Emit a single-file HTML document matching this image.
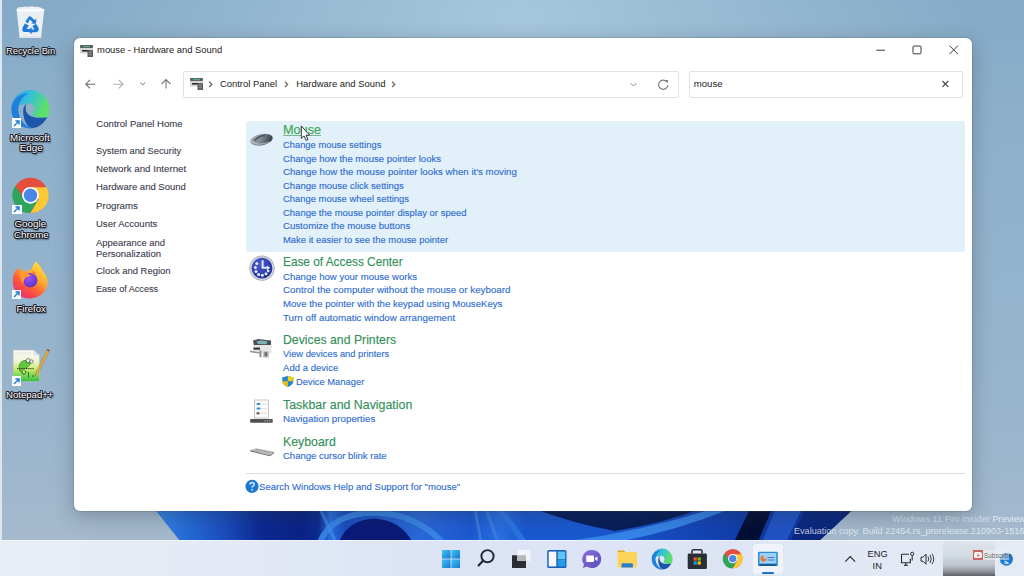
<!DOCTYPE html>
<html><head><meta charset="utf-8">
<style>
*{margin:0;padding:0;box-sizing:border-box}
html,body{width:1024px;height:576px;overflow:hidden}
body{position:relative;font-family:"Liberation Sans",sans-serif;background:#8fb0ca}
.a{position:absolute;white-space:nowrap;line-height:1;transform-origin:0 0}
svg{position:absolute;overflow:visible}
#wall{position:absolute;left:0;top:0;width:1024px;height:576px;
 background:radial-gradient(ellipse 460px 260px at 520px 20px,rgba(170,202,222,.9) 0%,rgba(170,202,222,0) 100%),linear-gradient(180deg,#85aac6 0%,#8fb0cb 25%,#94b3cc 50%,#9bb6cd 78%,#a5b9cd 94%,#a8bacd 100%)}
#edge{position:absolute;left:0;top:0;width:1.5px;height:540px;background:#dfe5ec}
.dl{position:absolute;color:#fafafa;font-size:9.6px;line-height:1;white-space:nowrap;text-shadow:1px 0 0 #1c1c28,-1px 0 0 #1c1c28,0 1px 0 #1c1c28,0 -1px 0 #1c1c28,.7px .7px 0 #1c1c28,-.7px -.7px 0 #1c1c28,.7px -.7px 0 #1c1c28,-.7px .7px 0 #1c1c28,1px 1.5px 1.5px rgba(0,0,0,.7)}
#win{position:absolute;left:74px;top:38px;width:898px;height:473px;background:#fff;border-radius:6px;
 box-shadow:0 5px 20px rgba(40,50,60,.32),0 0 0 1px rgba(70,80,90,.18)}
.nav{color:#3a3a4c;font-size:9.6px;-webkit-text-stroke:0.2px rgba(58,58,76,.5)}
.lk{color:#2a6ad0;font-size:9.7px;-webkit-text-stroke:0.2px rgba(42,106,208,.6)}
.hd{color:#34905a;font-size:12.2px;-webkit-text-stroke:0.25px rgba(52,144,90,.6)}
#tb{position:absolute;left:0;top:540px;width:1024px;height:36px;background:linear-gradient(90deg,#e8edf5 0%,#e4eaf5 20%,#dbe3f5 45%,#dde5f5 70%,#e2e9f4 85%,#e4ebf5 100%);box-shadow:inset 0 1px 0 rgba(255,255,255,.5)}
.box{position:absolute;background:#fff;border:1px solid #e1e1e1;border-radius:2px}

</style></head><body>
<div id="wall"></div>
<svg style="left:0;top:500px" width="1024" height="42" viewBox="0 500 1024 42">
 <defs>
  <linearGradient id="bl" x1="150" y1="0" x2="860" y2="0" gradientUnits="userSpaceOnUse"><stop offset="0.007" stop-color="#3584e4"/><stop offset="0.056" stop-color="#2468d4"/><stop offset="0.106" stop-color="#1a4cbc"/><stop offset="0.155" stop-color="#0c2a92"/><stop offset="0.211" stop-color="#0a2286"/><stop offset="0.237" stop-color="#0c2a90"/><stop offset="0.254" stop-color="#2a70dc"/><stop offset="0.275" stop-color="#1a4cc0"/><stop offset="0.380" stop-color="#2a68d8"/><stop offset="0.451" stop-color="#1c58d0"/><stop offset="0.493" stop-color="#2a70e0"/><stop offset="0.528" stop-color="#1a58d0"/><stop offset="0.634" stop-color="#1a58d0"/><stop offset="0.775" stop-color="#1444b4"/><stop offset="0.838" stop-color="#103ca8"/><stop offset="0.915" stop-color="#0e36a0"/><stop offset="0.990" stop-color="#0a2a8a"/></linearGradient>
  <clipPath id="bc"><path d="M154.5 509L180 541H819L853.5 509Z"/></clipPath>
 </defs>
 <g clip-path="url(#bc)">
  <rect x="150" y="505" width="710" height="40" fill="url(#bl)"/>
  <path d="M318 548Q328 513 375 512.5Q420 514 447 548" fill="none" stroke="#3a86e6" stroke-width="6" opacity="0.9"/>
  <path d="M338 545Q346 520 374 518.5Q402 520 414 545Z" fill="#0a1a78"/>
  <path d="M475 509L481 542M486 509L498 542" stroke="#3a80e0" stroke-width="3" opacity="0.8"/>
  <path d="M500 509L524 542" stroke="#2f78e6" stroke-width="6" opacity="0.8"/>
  <path d="M535 509Q575 524 615 531Q660 524 700 509Z" fill="#03103e" opacity="0.8"/>
  <path d="M530 545Q620 538 712 509L730 509Q640 545 560 548Z" fill="#3a88ea" opacity="0.9"/>
  <path d="M320 509L336 542" stroke="#3f8de8" stroke-width="3" opacity="0.7"/>
  <path d="M750 509L772 509L758 542L734 542Z" fill="#030a2a" opacity="0.9"/>
  <path d="M776 509L802 509L786 542L762 542Z" fill="#2456c8" opacity="0.9"/>
  <path d="M805 509L853 509L820 542L790 542Z" fill="#0a2478" opacity="0.8"/>
 </g>
</svg>
<div id="edge"></div>
<div class="a" style="left:891.6px;top:513.9px;font-size:9.8px;transform:scaleX(0.952);color:rgba(228,237,246,.74)">Windows 11 Pro Insider <span style="color:rgba(235,243,250,.9)">Preview</span></div>
<div class="a" style="left:794px;top:526.1px;font-size:9.8px;transform:scaleX(0.926);color:rgba(235,242,250,.82)">Evaluation copy. Build 22454.rs_prerelease.210903-1516</div>
<!-- recycle bin -->
<svg style="left:14px;top:4px" width="34" height="36" viewBox="14 4 34 36">
 <path d="M16.6 9.3Q18 6.5 22 7.2Q25 5.8 28 7Q32 5.6 35 7Q39 6 44.3 9.3L41 37.8H19.6Z" fill="#eef2f6" opacity="0.95"/>
 <path d="M16.6 9.3H44.3L44 11.5H16.9Z" fill="#fbfcfd"/>
 <path d="M19.6 37.8H41L41.2 36H19.4Z" fill="#dfe6ee"/>
 <g fill="#1f7ad8">
  <path d="M25.4 21.8L28.4 17.2Q29.6 15.6 31.2 16.9L34.4 20L36.4 18.8L35.8 23.8L31 23.4L32.8 22.2L29.8 19.6L27.8 23.4Z"/>
  <path d="M22.6 27.4L25 23.4L28.8 25.4L26.6 29L30.4 29L28.6 32L24.2 32Q21.6 31.4 22.6 27.4Z"/>
  <path d="M38.4 27.6L36 23.8L32.4 26L34.4 29.4L31.6 29.4L31.6 27.2L27.8 30.8L31.6 34.2L31.6 32.2L36.6 32.2Q39.6 31.4 38.4 27.6Z"/>
 </g>
</svg>
<div class="dl" style="left:6px;top:47px;font-size:9.3px">Recycle Bin</div>
<!-- edge -->
<svg style="left:10px;top:89px" width="42" height="42" viewBox="10 89 42 42">
 <defs>
  <linearGradient id="eg1" x1="0" y1="0" x2="1" y2="0.35"><stop offset="0" stop-color="#2c9ee6"/><stop offset="0.5" stop-color="#35c0d8"/><stop offset="1" stop-color="#5ee06a"/></linearGradient>
 </defs>
 <path d="M11.3 109A19.1 19.1 0 0 1 49.5 109.3Q49.5 115 47.2 117.2Q37 119 32 114.5Q34.6 112 34.6 108.5Q34 104 29 103.5Q20 103.5 11.3 109Z" fill="url(#eg1)"/>
 <path d="M11.3 109C11.8 99 20 93.5 28.5 93.2C21 96.5 17.5 104 18.5 112C19.8 121 26 127 33.5 128.3C32.5 128.4 31.5 128.4 30.5 128.4C19.5 128.4 11.3 120 11.3 109Z" fill="#1f80dc"/>
 <path d="M23.2 111C23.2 107 24.8 104.5 27.5 103.5C25.5 106.5 25.3 110 27 113C30 117.2 36 118.6 47.2 117.2C44 123.5 38 127.8 32.5 128C26.5 127.5 23.2 119 23.2 111Z" fill="#1b56aa"/>
 <path d="M26.5 103.6Q30.5 102.8 33 105.5Q35 108.5 34 111.5Q33 114 30.5 114.3Q27 114.2 26 110.5Q25.3 106.5 26.5 103.6Z" fill="#8fb0c9"/>
</svg>
<div class="a" style="left:11.6px;top:118.3px;width:9.6px;height:9.8px;background:#fbfdff"></div>
<svg style="left:12px;top:119px" width="9" height="9" viewBox="0 0 9 9"><path d="M2 7L7 2M3.5 2H7V5.5" stroke="#1f78d0" stroke-width="1.4" fill="none"/></svg>
<div class="dl" style="left:10px;top:133px;font-size:9.8px">Microsoft</div>
<div class="dl" style="left:19.8px;top:143.3px;font-size:9.8px">Edge</div>
<!-- chrome -->
<svg style="left:11px;top:176px" width="40" height="40" viewBox="11 176 40 40">
 <circle cx="30.5" cy="195.3" r="17.6" fill="#e54d3c"/>
 <path d="M15.2 185.8L26.5 202L38.6 199.3L30.5 212.9A17.6 17.6 0 0 1 15.2 185.8Z" fill="#2ea55a"/>
 <path d="M46.7 187.3A17.6 17.6 0 0 1 30.5 212.9L38.6 199.3L30.5 187.3Z" fill="#fcc934"/>
 <circle cx="30.5" cy="195.3" r="8.4" fill="#fff"/>
 <circle cx="30.5" cy="195.3" r="6.7" fill="#4a86e8"/>
</svg>
<div class="a" style="left:12px;top:204.5px;width:9.6px;height:9.8px;background:#fbfdff"></div>
<svg style="left:12.4px;top:205px" width="9" height="9" viewBox="0 0 9 9"><path d="M2 7L7 2M3.5 2H7V5.5" stroke="#1f78d0" stroke-width="1.4" fill="none"/></svg>
<div class="dl" style="left:14.5px;top:218.7px;font-size:9.8px">Google</div>
<div class="dl" style="left:13.9px;top:230px;font-size:9.8px">Chrome</div>
<!-- firefox -->
<svg style="left:11px;top:259px" width="40" height="42" viewBox="11 259 40 42">
 <defs>
  <linearGradient id="ff1" x1="0.85" y1="0" x2="0.15" y2="1"><stop offset="0" stop-color="#ffe64a"/><stop offset="0.35" stop-color="#ffb02e"/><stop offset="0.65" stop-color="#ff5a36"/><stop offset="1" stop-color="#e8247e"/></linearGradient>
  <radialGradient id="ff2" cx="0.4" cy="0.35" r="0.7"><stop offset="0" stop-color="#a050f8"/><stop offset="1" stop-color="#5a34c8"/></radialGradient>
 </defs>
 <path d="M35.6 261.6Q41 266 43 271.5Q47.5 276 47.5 282Q47.5 293 36 297.5Q28 299.8 21 296.5Q12.8 291.5 12.8 281.5Q12.8 275 15.5 270.5L18.2 267.6L19.6 271.6L22.4 268.4L24.6 272.2Q28 269.5 31 270Q32.5 266 35.6 261.6Z" fill="url(#ff1)"/>
 <circle cx="30.2" cy="280.2" r="7.2" fill="url(#ff2)"/>
 <path d="M19.5 272.5Q24 271 27.5 273.5Q29.5 275 31.5 275Q29 277 25.5 277.3Q23.5 280 23.2 284Q20 280 19.5 272.5Z" fill="#ff9a2a"/>
 <path d="M31.5 270.8Q35.5 271.5 36.2 274Q34 273.6 32.5 274.2Z" fill="#ff7a3a"/>
</svg>
<div class="a" style="left:12px;top:289.5px;width:9.4px;height:9.4px;background:#fbfdff"></div>
<svg style="left:12.2px;top:289.8px" width="9" height="9" viewBox="0 0 9 9"><path d="M2 7L7 2M3.5 2H7V5.5" stroke="#1f78d0" stroke-width="1.4" fill="none"/></svg>
<div class="dl" style="left:16.5px;top:304.3px;font-size:9.6px">Firefox</div>
<!-- notepad++ -->
<svg style="left:11px;top:347px" width="42" height="40" viewBox="11 347 42 40">
 <defs><linearGradient id="np1" x1="0" y1="0" x2="0" y2="1"><stop offset="0" stop-color="#fbfbf8"/><stop offset="0.35" stop-color="#f0f4d8"/><stop offset="0.6" stop-color="#c8ec70"/><stop offset="1" stop-color="#30c040"/></linearGradient></defs>
 <path d="M13.2 350H33.5L39.5 355.5V381.5H13.2Z" fill="url(#np1)" stroke="#b8bcc0" stroke-width="0.6"/>
 <path d="M33.5 350V355.5H39.5Z" fill="#dde0e4"/>
 <path d="M15.5 352.5h16M15.5 354.2h16" stroke="#c8ccd0" stroke-width="0.5" stroke-dasharray="1 0.6"/>
 <path d="M19 369Q18.5 362 24 360.5Q28 359.5 31 362Q30 366 27 367.5Q23 368.5 21.5 372Q19.5 371.5 19 369Z" fill="#5cc83a" stroke="#2a5a20" stroke-width="0.5"/>
 <circle cx="28.2" cy="360.6" r="2" fill="#f4f4f4" stroke="#333" stroke-width="0.6"/>
 <circle cx="31.5" cy="361.6" r="1.7" fill="#f4f4f4" stroke="#333" stroke-width="0.6"/>
 <path d="M17 368.6H34" stroke="#2a2a2a" stroke-width="0.9" stroke-dasharray="1.2 0.6"/>
 <path d="M22 371.5a2 2 0 1 0 2.5 -1.2M28.5 372v5.5M32 376h2" fill="none" stroke="#2a4a20" stroke-width="0.8"/>
 <path d="M47.6 349.2L35.6 373.2L35.4 375.8L37.4 374.2L49.6 350.2Z" fill="#f2b430" stroke="#8a6020" stroke-width="0.4"/>
 <path d="M47.6 349.2L49.6 350.2L48.8 351.6L46.9 350.6Z" fill="#7a4a6a"/>
</svg>
<div class="a" style="left:11.6px;top:376px;width:9.6px;height:9.8px;background:#fbfdff"></div>
<svg style="left:12px;top:376.5px" width="9" height="9" viewBox="0 0 9 9"><path d="M2 7L7 2M3.5 2H7V5.5" stroke="#1f78d0" stroke-width="1.4" fill="none"/></svg>
<div class="dl" style="left:6px;top:390px;font-size:9.6px">Notepad++</div>
<div id="win"></div>
<!-- title icon -->
<svg style="left:80px;top:45px" width="13" height="12" viewBox="0 0 13 12">
 <rect x="0" y="0" width="13" height="3" rx="1" fill="#5a5a5a"/>
 <rect x="3" y="0.8" width="7" height="1.4" fill="#48b07a"/>
 <rect x="0" y="3" width="13" height="5.5" fill="#d4d4d4"/>
 <rect x="2" y="5" width="7" height="1.6" fill="#2e2e2e"/>
 <rect x="7.5" y="5.2" width="5.5" height="6.8" fill="#5c5c5c"/>
 <path d="M8.5 7.5h3.5M8.5 9.5h3.5M10.2 6.2v5" stroke="#9a9a9a" stroke-width="0.6"/>
</svg>
<div class="a" style="left:97.1px;top:45.3px;font-size:9.4px;color:#1a1a1a">mouse - Hardware and Sound</div>
<!-- title buttons -->
<svg style="left:870px;top:40px" width="100" height="20" viewBox="870 40 100 20">
 <path d="M876.3 50.2h8.7" stroke="#3a3a3a" stroke-width="1"/>
 <rect x="913" y="46" width="8" height="7.8" rx="1" fill="none" stroke="#3a3a3a" stroke-width="1"/>
 <path d="M949.5 45.7l8.4 8.4M957.9 45.7l-8.4 8.4" stroke="#3a3a3a" stroke-width="1"/>
</svg>
<!-- nav arrows -->
<svg style="left:80px;top:74px" width="100" height="20" viewBox="80 74 100 20">
 <path d="M95.2 84.2H85.8M90 79.9l-4.2 4.3 4.2 4.2" stroke="#6e6e6e" stroke-width="1.1" fill="none"/>
 <path d="M113.6 84.2h9.4M118.8 79.9l4.2 4.3-4.2 4.2" stroke="#adadad" stroke-width="1.1" fill="none"/>
 <path d="M140.3 82.6l2.4 2.2 2.4-2.2" stroke="#6a6a6a" stroke-width="1" fill="none"/>
 <path d="M166 88.6V79.6M161.6 84l4.4-4.4 4.4 4.4" stroke="#7a7a7a" stroke-width="1.1" fill="none"/>
</svg>
<div class="box" style="left:183px;top:71px;width:496px;height:27px"></div>
<div class="box" style="left:689px;top:71px;width:274px;height:26.5px"></div>
<!-- address icon -->
<svg style="left:190px;top:78px" width="13" height="12" viewBox="0 0 13 12">
 <rect x="0" y="0" width="13" height="3" rx="1" fill="#5a5a5a"/>
 <rect x="3" y="0.8" width="7" height="1.4" fill="#48b07a"/>
 <rect x="0" y="3" width="13" height="5.5" fill="#d4d4d4"/>
 <rect x="2" y="5" width="7" height="1.6" fill="#2e2e2e"/>
 <rect x="7.5" y="5.2" width="5.5" height="6.8" fill="#5c5c5c"/>
 <path d="M8.5 7.5h3.5M8.5 9.5h3.5M10.2 6.2v5" stroke="#9a9a9a" stroke-width="0.6"/>
</svg>
<svg style="left:200px;top:74px" width="480" height="20" viewBox="200 74 480 20">
 <path d="M209.2 81.8l2.6 2.6-2.6 2.6M285 81.8l2.6 2.6-2.6 2.6M392.2 81.8l2.6 2.6-2.6 2.6" stroke="#6a6a6a" stroke-width="1.3" fill="none"/>
 <path d="M630.5 83l3 3 3-3" stroke="#8a8a8a" stroke-width="1" fill="none"/>
 <path d="M666.6 81.6A4.6 4.6 0 1 0 667.8 84.9" stroke="#787878" stroke-width="1.1" fill="none"/>
 <path d="M664.6 80h3.2v3.2z" fill="#787878"/>
</svg>
<div class="a" style="left:219.9px;top:79px;font-size:9.45px;color:#1a1a1a">Control Panel</div>
<div class="a" style="left:296.25px;top:79px;font-size:9.45px;color:#1a1a1a">Hardware and Sound</div>
<div class="a" style="left:693.75px;top:78.8px;font-size:9.6px;color:#1a1a1a">mouse</div>
<svg style="left:940px;top:78px" width="12" height="12" viewBox="940 78 12 12">
 <path d="M942.5 81l5.8 5.8M948.3 81l-5.8 5.8" stroke="#444" stroke-width="1.1"/>
</svg>
<!-- highlight -->
<div style="position:absolute;left:245.5px;top:121px;width:719px;height:130.5px;background:#e2f0fa;border-radius:2px"></div>
<div style="position:absolute;left:245.5px;top:472.5px;width:719px;height:1px;background:#dcdcdc"></div>
<!-- mouse icon -->
<svg style="left:248px;top:130px" width="28" height="18" viewBox="248 130 28 18">
 <defs><linearGradient id="mg" x1="0" y1="0" x2="1" y2="0.3"><stop offset="0" stop-color="#a8b0b6"/><stop offset="0.55" stop-color="#858e95"/><stop offset="1" stop-color="#3a4650"/></linearGradient></defs>
 <ellipse cx="261.5" cy="139.7" rx="11.4" ry="5.6" transform="rotate(-12 261.5 139.7)" fill="url(#mg)"/>
 <path d="M254.5 140.5Q260 135.5 265 135.6" stroke="#4a535a" stroke-width="1.5" fill="none"/>
 <path d="M251 141.5Q258 146.5 270 142" stroke="#c8ccd0" stroke-width="0.8" fill="none"/>
</svg>
<!-- ease of access icon -->
<svg style="left:248px;top:254px" width="28" height="28" viewBox="248 254 28 28">
 <defs><radialGradient id="ea" cx="0.4" cy="0.3" r="0.75"><stop offset="0" stop-color="#4a5cd0"/><stop offset="1" stop-color="#1e2c98"/></radialGradient></defs>
 <circle cx="262" cy="268.2" r="12.6" fill="#9aa0ac"/>
 <circle cx="262" cy="268.2" r="11.9" fill="#d4d8e0"/>
 <circle cx="262" cy="268.2" r="10.4" fill="url(#ea)"/>
 <g fill="#e4e9f6">
  <circle cx="256.8" cy="263.6" r="1.5"/><circle cx="255.4" cy="267.6" r="1.5"/><circle cx="256" cy="271.6" r="1.5"/><circle cx="258.6" cy="274.4" r="1.5"/><circle cx="262.4" cy="275.2" r="1.5"/><circle cx="266" cy="273.8" r="1.5"/><circle cx="268.2" cy="271" r="1.3"/>
 </g>
 <path d="M262.6 260.2v7.6h5.2" stroke="#e4e9f6" stroke-width="2" fill="none"/>
 <path d="M267 265.4l3.2 2.4-3.2 2.4z" fill="#e4e9f6"/>
</svg>
<!-- printer icon -->
<svg style="left:248px;top:337px" width="26" height="22" viewBox="248 337 26 22">
 <path d="M253 340.6l5-1.6 13 1.4v5l-2 1H254z" fill="#4a4e52"/>
 <path d="M256.5 341.3l4.5-.9 6.5.8-1 3-8.5-.3z" fill="#7fb0b8"/>
 <rect x="253" y="345" width="18.6" height="8.2" fill="#e6e6e6"/>
 <path d="M253.5 347.5h6.5v2.2h-6.5z" fill="#3a3a3a"/>
 <path d="M250 350.5l9.5 1.7v1.5l-9.5-1.5z" fill="#9a9a9a"/>
 <rect x="259.5" y="350.4" width="2" height="6.8" fill="#8c8c8c"/>
 <rect x="263" y="351" width="6" height="6.8" rx="1" fill="#c4c4c4"/>
 <rect x="264.5" y="352.2" width="2.8" height="4" fill="#6a6a6a"/>
</svg>
<!-- shield -->
<svg style="left:281px;top:375px" width="14" height="13" viewBox="281 375 14 13">
 <path d="M287.8 375.8Q285 377 282.3 377.2V381Q282.6 385 287.8 387Q293 385 293.4 381V377.2Q290.6 377 287.8 375.8z" fill="#1c86d8"/>
 <path d="M287.8 375.8Q290.6 377 293.4 377.2V381.3H287.8z" fill="#f2d300"/>
 <path d="M282.3 381.3H287.8V387Q282.6 385 282.3 381.3z" fill="#f4c000"/>
</svg>
<!-- taskbar icon -->
<svg style="left:249px;top:398px" width="26" height="26" viewBox="249 398 26 26">
 <rect x="254.5" y="400" width="14" height="18" fill="#fafafa" stroke="#b8b8b8" stroke-width="0.8"/>
 <rect x="256.5" y="403" width="4" height="2" rx="1" fill="#2f8fe0"/>
 <rect x="256.5" y="407.6" width="4" height="2" rx="1" fill="#2f8fe0"/>
 <rect x="256.5" y="412.3" width="3" height="2" fill="#555"/>
 <path d="M261 404h6M261 408.6h6M261 413.3h6" stroke="#d0d0d0" stroke-width="0.6"/>
 <rect x="250.2" y="419" width="22.5" height="3.8" rx="0.6" fill="#505050"/>
 <path d="M264.5 420.9h1.2M267 420.9h1.2M269.5 420.9h1.2" stroke="#c8c8c8" stroke-width="1"/>
</svg>
<!-- keyboard icon -->
<svg style="left:248px;top:446px" width="28" height="12" viewBox="248 446 28 12">
 <path d="M250 450.2l6-2 18 3.5-4 3.8z" fill="#b9b9b9"/>
 <path d="M250 450.2l20 5.3 4-3.8v1.2l-4 3.4-20-5.1z" fill="#5a5a5a"/>
 <path d="M256 449.5l14 2.8" stroke="#8a8a8a" stroke-width="0.5"/>
</svg>
<!-- help icon -->
<svg style="left:244px;top:479px" width="16" height="16" viewBox="244 479 16 16">
 <circle cx="252" cy="486.3" r="6.6" fill="#1a78d0"/>
 <path d="M249.9 484.6Q250 482.5 252.1 482.5Q254.2 482.6 254.2 484.4Q254.1 485.6 252.6 486.3Q252.1 486.7 252.1 487.6" stroke="#cfe4f8" stroke-width="1.5" fill="none"/>
 <circle cx="252.1" cy="489.8" r="0.95" fill="#cfe4f8"/>
</svg>
<div class="a nav" style="left:96.30px;top:119.14px;transform:scaleX(1.000);">Control Panel Home</div>
<div class="a nav" style="left:96.30px;top:145.54px;transform:scaleX(0.968);">System and Security</div>
<div class="a nav" style="left:96.30px;top:163.74px;transform:scaleX(1.012);">Network and Internet</div>
<div class="a nav" style="left:96.30px;top:182.34px;transform:scaleX(0.991);">Hardware and Sound</div>
<div class="a nav" style="left:96.30px;top:200.84px;transform:scaleX(1.007);">Programs</div>
<div class="a nav" style="left:96.30px;top:219.14px;transform:scaleX(0.992);">User Accounts</div>
<div class="a nav" style="left:96.30px;top:237.54px;transform:scaleX(0.980);">Appearance and</div>
<div class="a nav" style="left:96.30px;top:249.44px;transform:scaleX(0.991);">Personalization</div>
<div class="a nav" style="left:96.30px;top:265.64px;transform:scaleX(0.984);">Clock and Region</div>
<div class="a nav" style="left:96.30px;top:283.84px;transform:scaleX(0.945);">Ease of Access</div>
<div class="a hd" style="left:283.20px;top:124.03px;transform:scaleX(1.040);text-decoration:underline;color:#3cae50">Mouse</div>
<div class="a hd" style="left:283.20px;top:256.23px;transform:scaleX(0.970);">Ease of Access Center</div>
<div class="a hd" style="left:283.20px;top:333.63px;transform:scaleX(1.006);">Devices and Printers</div>
<div class="a hd" style="left:283.20px;top:399.23px;transform:scaleX(1.015);">Taskbar and Navigation</div>
<div class="a hd" style="left:283.20px;top:435.83px;transform:scaleX(1.012);">Keyboard</div>
<div class="a lk" style="left:282.90px;top:140.06px;transform:scaleX(0.966);">Change mouse settings</div>
<div class="a lk" style="left:282.90px;top:153.56px;transform:scaleX(0.988);">Change how the mouse pointer looks</div>
<div class="a lk" style="left:282.90px;top:167.16px;transform:scaleX(1.000);">Change how the mouse pointer looks when it&#39;s moving</div>
<div class="a lk" style="left:282.90px;top:180.75px;transform:scaleX(0.980);">Change mouse click settings</div>
<div class="a lk" style="left:282.90px;top:194.25px;transform:scaleX(0.971);">Change mouse wheel settings</div>
<div class="a lk" style="left:282.90px;top:207.85px;transform:scaleX(0.979);">Change the mouse pointer display or speed</div>
<div class="a lk" style="left:282.90px;top:221.45px;transform:scaleX(0.993);">Customize the mouse buttons</div>
<div class="a lk" style="left:282.90px;top:234.95px;transform:scaleX(0.973);">Make it easier to see the mouse pointer</div>
<div class="a lk" style="left:282.90px;top:271.86px;transform:scaleX(0.988);">Change how your mouse works</div>
<div class="a lk" style="left:282.90px;top:285.36px;transform:scaleX(1.008);">Control the computer without the mouse or keyboard</div>
<div class="a lk" style="left:282.90px;top:298.95px;transform:scaleX(0.991);">Move the pointer with the keypad using MouseKeys</div>
<div class="a lk" style="left:282.90px;top:312.56px;transform:scaleX(1.012);">Turn off automatic window arrangement</div>
<div class="a lk" style="left:282.90px;top:349.25px;transform:scaleX(0.964);">View devices and printers</div>
<div class="a lk" style="left:282.90px;top:362.75px;transform:scaleX(0.987);">Add a device</div>
<div class="a lk" style="left:282.90px;top:414.15px;transform:scaleX(1.008);">Navigation properties</div>
<div class="a lk" style="left:282.90px;top:450.75px;transform:scaleX(0.982);">Change cursor blink rate</div>
<div class="a lk" style="left:296.10px;top:376.56px;transform:scaleX(0.968);">Device Manager</div>
<div class="a lk" style="left:259.40px;top:481.95px;transform:scaleX(0.989);">Search Windows Help and Support for &quot;mouse&quot;</div>
<!-- cursor -->
<svg style="left:300px;top:125px" width="12" height="17" viewBox="300 125 12 17">
 <path d="M301.3 125.9V138.4L304.1 135.9L306.1 140.3L308 139.5L306 135.2H309.6Z" fill="#fff" stroke="#222" stroke-width="0.9" stroke-linejoin="round"/>
</svg>
<div id="tb"></div>
<!-- start -->
<svg style="left:441px;top:549px" width="20" height="20" viewBox="441 549 20 20">
 <defs><linearGradient id="wl" x1="0" y1="0" x2="1" y2="1"><stop offset="0" stop-color="#3cc4f4"/><stop offset="1" stop-color="#1a78d0"/></linearGradient></defs>
 <rect x="442" y="550" width="8.6" height="8.6" fill="url(#wl)"/>
 <rect x="451.4" y="550" width="8.6" height="8.6" fill="url(#wl)"/>
 <rect x="442" y="559.4" width="8.6" height="8.6" fill="url(#wl)"/>
 <rect x="451.4" y="559.4" width="8.6" height="8.6" fill="url(#wl)"/>
</svg>
<!-- search -->
<svg style="left:476px;top:548px" width="22" height="22" viewBox="476 548 22 22">
 <circle cx="487.5" cy="556.2" r="6.1" fill="none" stroke="#1e2a3a" stroke-width="1.9"/>
 <path d="M483.2 560.6L478.6 565.4" stroke="#1e2a3a" stroke-width="2.2" stroke-linecap="round"/>
</svg>
<!-- task view -->
<svg style="left:510px;top:548px" width="22" height="22" viewBox="510 548 22 22">
 <rect x="517.2" y="550" width="13.2" height="11" rx="1" fill="#f4f6fa" opacity="0.9"/>
 <path d="M512 555.2h5.2v5.5h8.8v7.3H512z" fill="#2a2d33"/>
 <rect x="517.2" y="555.2" width="8.8" height="5.5" fill="#b8b8bc"/>
</svg>
<!-- widgets -->
<svg style="left:546px;top:549px" width="22" height="20" viewBox="546 549 22 20">
 <rect x="547.2" y="550" width="19.3" height="18" rx="1.5" fill="#1a64b8"/>
 <rect x="548.7" y="551.6" width="7.6" height="14.8" fill="#f6f8fc"/>
 <rect x="557.8" y="551.6" width="7.4" height="7.5" fill="#5cc6f4"/>
 <rect x="557.8" y="559.5" width="7.4" height="6.9" fill="#2a9ae8"/>
</svg>
<!-- chat -->
<svg style="left:581px;top:549px" width="22" height="21" viewBox="581 549 22 21">
 <defs><linearGradient id="ch" x1="0" y1="0" x2="1" y2="1"><stop offset="0" stop-color="#8b6ed8"/><stop offset="1" stop-color="#5a4cc0"/></linearGradient></defs>
 <path d="M591.6 550A9.3 9 0 1 1 587 566.6L582.8 568L584 564.3A9.3 9 0 0 1 591.6 550Z" fill="url(#ch)"/>
 <rect x="586.2" y="555.5" width="7.8" height="6.4" rx="1" fill="#fff"/>
 <path d="M594.6 558.7l2.8-2.4v5z" fill="#fff"/>
</svg>
<!-- explorer -->
<svg style="left:616px;top:549px" width="23" height="20" viewBox="616 549 23 20">
 <path d="M617.6 551.4q0-1 1-1h5.2l1.8 1.6h-8z" fill="#e6a818"/>
 <rect x="617.6" y="552" width="19.4" height="15.6" rx="1" fill="#fcd45a"/>
 <path d="M621.5 567.6v-3.2q0-1.2 1.2-1.2h9q1.2 0 1.2 1.2v3.2z" fill="#2a7cd0"/>
</svg>
<!-- edge -->
<svg style="left:651px;top:548px" width="23" height="23" viewBox="10 89 42 42">
 <path d="M11.3 109A19.1 19.1 0 0 1 49.5 109.3Q49.5 115 47.2 117.2Q37 119 32 114.5Q34.6 112 34.6 108.5Q34 104 29 103.5Q20 103.5 11.3 109Z" fill="url(#eg1)"/>
 <path d="M11.3 109C11.8 99 20 93.5 28.5 93.2C21 96.5 17.5 104 18.5 112C19.8 121 26 127 33.5 128.3C32.5 128.4 31.5 128.4 30.5 128.4C19.5 128.4 11.3 120 11.3 109Z" fill="#1f80dc"/>
 <path d="M23.2 111C23.2 107 24.8 104.5 27.5 103.5C25.5 106.5 25.3 110 27 113C30 117.2 36 118.6 47.2 117.2C44 123.5 38 127.8 32.5 128C26.5 127.5 23.2 119 23.2 111Z" fill="#1b56aa"/>
 <path d="M26.5 103.6Q30.5 102.8 33 105.5Q35 108.5 34 111.5Q33 114 30.5 114.3Q27 114.2 26 110.5Q25.3 106.5 26.5 103.6Z" fill="#dfe6f3"/>
</svg>
<!-- store -->
<svg style="left:686px;top:548px" width="22" height="22" viewBox="686 548 22 22">
 <path d="M692 553.5v-2.2q0-1.6 1.6-1.6h6.8q1.6 0 1.6 1.6v2.2" fill="none" stroke="#2a2e36" stroke-width="1.6"/>
 <rect x="687.7" y="553.5" width="19.2" height="15.5" rx="1.2" fill="#2a2e36"/>
 <rect x="693.6" y="557.4" width="3.2" height="3.2" fill="#f25022"/>
 <rect x="697.6" y="557.4" width="3.2" height="3.2" fill="#7fba00"/>
 <rect x="693.6" y="561.4" width="3.2" height="3.2" fill="#00a4ef"/>
 <rect x="697.6" y="561.4" width="3.2" height="3.2" fill="#ffb900"/>
</svg>
<!-- chrome -->
<svg style="left:722px;top:548px" width="22" height="22" viewBox="11 176 40 40">
 <circle cx="30.5" cy="195.3" r="17.6" fill="#e54d3c"/>
 <path d="M15.2 185.8L26.5 202L38.6 199.3L30.5 212.9A17.6 17.6 0 0 1 15.2 185.8Z" fill="#2ea55a"/>
 <path d="M46.7 187.3A17.6 17.6 0 0 1 30.5 212.9L38.6 199.3L30.5 187.3Z" fill="#fcc934"/>
 <circle cx="30.5" cy="195.3" r="8.4" fill="#fff"/>
 <circle cx="30.5" cy="195.3" r="6.7" fill="#4a86e8"/>
</svg>
<!-- control panel active -->
<div class="a" style="left:753px;top:544px;width:29.5px;height:29.5px;background:#f2f5fb;border-radius:4px;opacity:.9"></div>
<svg style="left:757px;top:551px" width="22" height="17" viewBox="757 551 22 17">
 <rect x="758" y="551.7" width="19.8" height="14.3" rx="1" fill="#2a8ad8"/>
 <rect x="759.5" y="553" width="16.8" height="10.8" fill="#9cd0f4"/>
 <path d="M763.5 555.5a3 3 0 1 0 3 3h-3z" fill="#e87a30"/>
 <path d="M767.5 557.5h7M767.5 560h7" stroke="#2a6ab0" stroke-width="0.8"/>
 <rect x="759.5" y="563.8" width="16.8" height="2.2" fill="#1a5a9a"/>
</svg>
<div class="a" style="left:762px;top:572px;width:12px;height:2.4px;background:#1a6fd0;border-radius:1px"></div>
<!-- tray -->
<svg style="left:843px;top:553px" width="14" height="12" viewBox="843 553 14 12">
 <path d="M845.3 561.6l4.9-4.9 4.9 4.9" fill="none" stroke="#2a2a2a" stroke-width="1.2"/>
</svg>
<div class="a" style="left:867.6px;top:549.5px;font-size:9.3px;color:#222">ENG</div>
<div class="a" style="left:872.6px;top:561.8px;font-size:9.3px;color:#222">IN</div>
<svg style="left:899px;top:550px" width="40" height="18" viewBox="899 550 40 18">
 <path d="M901.5 554.2h7.5M901.5 554.2v8.5h8.8v-4" fill="none" stroke="#2a2a2a" stroke-width="1.1"/>
 <path d="M904 565.3h4" stroke="#2a2a2a" stroke-width="1.1"/>
 <path d="M905.8 562.7v2.6" stroke="#2a2a2a" stroke-width="1.1"/>
 <circle cx="912.2" cy="553.8" r="1.6" fill="none" stroke="#2a2a2a" stroke-width="1"/>
 <path d="M912.2 555.4v5" stroke="#2a2a2a" stroke-width="1.1"/>
 <path d="M921 557.2h2l3-3v10l-3-3h-2z" fill="none" stroke="#2a2a2a" stroke-width="1"/>
 <path d="M928 556.5q1.5 2.5 0 5M930 555q2.6 4 0 8M932 553.8q3.5 5.2 0 10.4" fill="none" stroke="#2a2a2a" stroke-width="0.9"/>
</svg>
<div class="a" style="left:943px;top:541px;width:52px;height:35px;background:linear-gradient(180deg,#dde4ec 0%,#d4dce4 40%,#bcc3ca 70%,#8c9196 88%,#5c6064 100%)"></div>
<svg style="left:998px;top:551px" width="17" height="17" viewBox="998 551 17 17">
 <circle cx="1006.4" cy="559.2" r="6.5" fill="#1c7ad6"/>
 <path d="M1004.2 563.2h4.4l-4-2.2" stroke="#e8f0f8" stroke-width="1.1" fill="none"/>
</svg>
<div class="a" style="left:983px;top:550.2px;width:26px;height:9.8px;background:rgba(238,240,242,.55)"></div>
<div class="a" style="left:984px;top:551.6px;font-size:7px;color:rgba(80,80,80,.85);transform:scaleX(0.9)">Subscribe</div>
<div class="a" style="left:972.6px;top:550.2px;width:10.8px;height:9.8px;background:#cc6560"></div>
<div class="a" style="left:974.4px;top:552.4px;width:7.2px;height:5.4px;background:#f6f0f0;border-radius:1.5px"></div>
<svg style="left:976.6px;top:553.6px" width="4" height="4" viewBox="0 0 4 4"><path d="M0.4 0.2L3.2 1.5L0.4 2.8Z" fill="#cc6560"/></svg>

</body></html>
